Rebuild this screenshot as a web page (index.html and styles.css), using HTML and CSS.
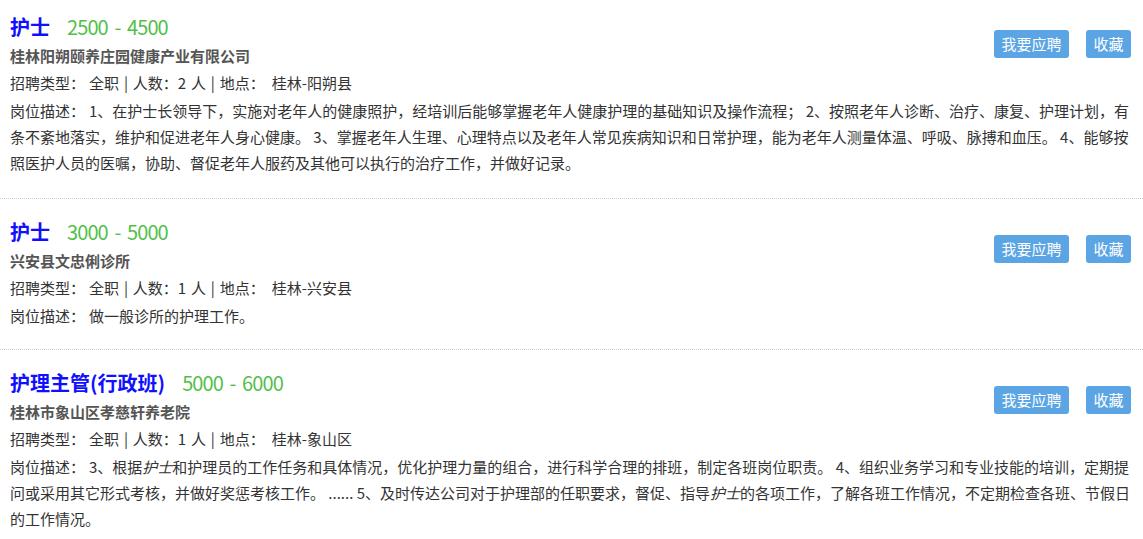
FILE: index.html
```html
<!DOCTYPE html>
<html lang="zh-CN">
<head>
  <meta charset="UTF-8">
  <title>招聘信息</title>
  <link rel="stylesheet" href="styles.css">
</head>
<body>
  <ul class="job-list">
    <li class="job">
      <div class="job-actions">
        <a class="btn" href="#">我要应聘</a>
        <a class="btn" href="#">收藏</a>
      </div>
      <h3 class="job-title"><a href="#">护士</a><span class="salary">2500 - 4500</span></h3>
      <p class="company">桂林阳朔颐养庄园健康产业有限公司</p>
      <p class="info">招聘类型：<span class="val">全职</span> | 人数：2 人 | 地点：<span class="val">桂林-阳朔县</span></p>
      <p class="desc">岗位描述：<span class="val">1、在护士长领导下，实施对老年人的健康照护，经培训后能够掌握老年人健康护理的基础知识及操作流程； 2、按照老年人诊断、治疗、康复、护理计划，有条不紊地落实，维护和促进老年人身心健康。 3、掌握老年人生理、心理特点以及老年人常见疾病知识和日常护理，能为老年人测量体温、呼吸、脉搏和血压。 4、能够按照医护人员的医嘱，协助、督促老年人服药及其他可以执行的治疗工作，并做好记录。</span></p>
    </li>
    <li class="job">
      <div class="job-actions">
        <a class="btn" href="#">我要应聘</a>
        <a class="btn" href="#">收藏</a>
      </div>
      <h3 class="job-title"><a href="#">护士</a><span class="salary">3000 - 5000</span></h3>
      <p class="company">兴安县文忠俐诊所</p>
      <p class="info">招聘类型：<span class="val">全职</span> | 人数：1 人 | 地点：<span class="val">桂林-兴安县</span></p>
      <p class="desc">岗位描述：<span class="val">做一般诊所的护理工作。</span></p>
    </li>
    <li class="job">
      <div class="job-actions">
        <a class="btn" href="#">我要应聘</a>
        <a class="btn" href="#">收藏</a>
      </div>
      <h3 class="job-title"><a href="#">护理主管(行政班)</a><span class="salary">5000 - 6000</span></h3>
      <p class="company">桂林市象山区孝慈轩养老院</p>
      <p class="info">招聘类型：<span class="val">全职</span> | 人数：1 人 | 地点：<span class="val">桂林-象山区</span></p>
      <p class="desc">岗位描述：<span class="val">3、根据<em>护士</em>和护理员的工作任务和具体情况，优化护理力量的组合，进行科学合理的排班，制定各班岗位职责。 4、组织业务学习和专业技能的培训，定期提问或采用其它形式考核，并做好奖惩考核工作。 ...... 5、及时传达公司对于护理部的任职要求，督促、指导<em>护士</em>的各项工作，了解各班工作情况，不定期检查各班、节假日的工作情况。</span></p>
    </li>
  </ul>
</body>
</html>
```

FILE: styles.css
```css
body {
  margin: 0;
  padding: 0;
  background-color: #fff;
  color: #333;
  font-family: "Noto Sans CJK SC", "Noto Sans", sans-serif;
  font-size: 15px;
}

.job-list {
  list-style: none;
  margin: 0;
  padding: 0;
}

.job {
  padding: 18px 10px 20px 10px;
  border-bottom: 1px dotted #ccc;
}

.job:first-child {
  padding-top: 12px;
  padding-bottom: 22px;
}

.job-actions {
  float: right;
  display: flex;
  gap: 17px;
  margin-top: 18px;
  margin-right: 2px;
}

.btn {
  display: block;
  height: 28px;
  line-height: 28px;
  padding: 0 7.5px;
  background-color: #5ba5e4;
  color: #fff;
  font-size: 15px;
  text-decoration: none;
  border-radius: 3px;
}

.job-title {
  margin: 0;
  font-size: 20px;
  line-height: 30px;
  font-weight: normal;
}

.job-title a {
  color: #1010ff;
  font-weight: bold;
  text-decoration: none;
}

.salary {
  color: #52bf4a;
  margin-left: 17px;
  letter-spacing: -0.9px;
  word-spacing: 3px;
}

.company {
  margin: 0;
  line-height: 28px;
  font-weight: bold;
  color: #555;
}

.info {
  margin: 0;
  line-height: 26px;
  word-spacing: 1.5px;
}

.desc {
  margin: 2px 0 0 0;
  line-height: 26px;
}

.val {
  margin-left: 4px;
}

.info .val:last-child {
  margin-left: 7px;
}

.desc em {
  font-style: italic;
}
```
